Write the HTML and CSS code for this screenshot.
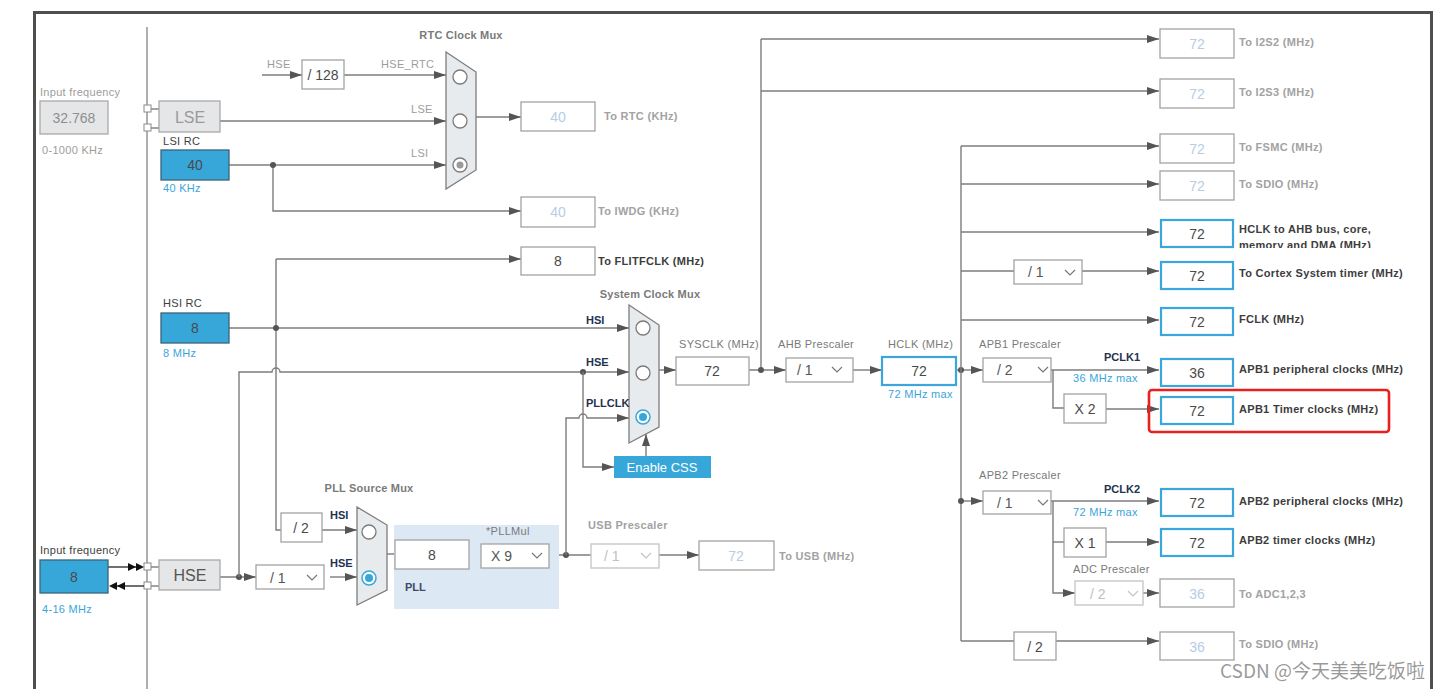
FILE: index.html
```html
<!DOCTYPE html>
<html lang="en">
<head>
<meta charset="utf-8">
<title>Clock Configuration</title>
<link rel="stylesheet" href="styles.css">
</head>
<body>
<div class="page">
  <div class="frame"></div>
  <svg class="diagram" width="1446" height="689" viewBox="0 0 1446 689" xmlns="http://www.w3.org/2000/svg">
    <defs>
      <marker id="ar" markerWidth="12" markerHeight="8" refX="12" refY="4" orient="auto" markerUnits="userSpaceOnUse">
        <path d="M0,0 L12,4 L0,8 z" class="head"/>
      </marker>
      <clipPath id="clipAhb"><rect x="1236" y="215" width="200" height="33"/></clipPath>
    </defs>

    <!-- ================= WIRES ================= -->
    <line class="bus" x1="147" y1="27" x2="147" y2="689"/>

    <!-- LSE / HSE pins -->
    <line class="w" x1="151" y1="109" x2="159" y2="109"/>
    <line class="w" x1="151" y1="128" x2="159" y2="128"/>
    <line class="w" x1="151" y1="567" x2="159" y2="567"/>
    <line class="w" x1="151" y1="586" x2="159" y2="586"/>
    <rect class="pin" x="144" y="105" width="7" height="7"/>
    <rect class="pin" x="144" y="124" width="7" height="7"/>
    <rect class="pin" x="144" y="563" width="7" height="7"/>
    <rect class="pin" x="144" y="582" width="7" height="7"/>
    <line class="wk" x1="108" y1="567" x2="140" y2="567"/>
    <line class="wk" x1="112" y1="586" x2="144" y2="586"/>
    <polygon class="blk" points="128,563 136,567 128,571"/>
    <polygon class="blk" points="136,563 144,567 136,571"/>
    <polygon class="blk" points="117,582 109,586 117,590"/>
    <polygon class="blk" points="125,582 117,586 125,590"/>

    <!-- RTC section -->
    <line class="w" x1="262" y1="75" x2="302" y2="75" marker-end="url(#ar)"/>
    <line class="w" x1="344" y1="75" x2="446" y2="75" marker-end="url(#ar)"/>
    <line class="w" x1="220" y1="121" x2="446" y2="121" marker-end="url(#ar)"/>
    <line class="w" x1="229" y1="165" x2="446" y2="165" marker-end="url(#ar)"/>
    <polyline class="w" points="273,165 273,211 521,211" marker-end="url(#ar)"/>
    <circle class="dot" cx="273" cy="165" r="3"/>
    <line class="w" x1="476" y1="117" x2="521" y2="117" marker-end="url(#ar)"/>

    <!-- I2S branch -->
    <line class="w" x1="761" y1="39" x2="761" y2="370"/>
    <line class="w" x1="761" y1="39" x2="1159" y2="39" marker-end="url(#ar)"/>
    <line class="w" x1="761" y1="91" x2="1159" y2="91" marker-end="url(#ar)"/>

    <!-- HSI -->
    <line class="w" x1="229" y1="328" x2="629" y2="328" marker-end="url(#ar)"/>
    <polyline class="w" points="276,259 276,530 281,530"/>
    <line class="w" x1="276" y1="259" x2="521" y2="259" marker-end="url(#ar)"/>
    <circle class="dot" cx="276" cy="328" r="3"/>

    <!-- HSE -->
    <line class="w" x1="220" y1="577" x2="256" y2="577" marker-end="url(#ar)"/>
    <circle class="dot" cx="239" cy="577" r="3"/>
    <path class="w" d="M239,577 L239,372 L272,372 A4,4 0 0 1 280,372 L629,372" marker-end="url(#ar)"/>
    <circle class="dot" cx="583" cy="372" r="3"/>
    <polyline class="w" points="583,372 583,467 614,467" marker-end="url(#ar)"/>

    <!-- PLL -->
    <line class="w" x1="330" y1="577" x2="357" y2="577" marker-end="url(#ar)"/>
    <line class="w" x1="322" y1="530" x2="357" y2="530" marker-end="url(#ar)"/>
    <line class="w" x1="387" y1="554" x2="395" y2="554"/>
    <line class="w" x1="469" y1="555" x2="481" y2="555"/>
    <line class="w" x1="549" y1="555" x2="591" y2="555"/>
    <circle class="dot" cx="566" cy="555" r="3"/>
    <path class="w" d="M566,555 L566,418 L579,418 A4,4 0 0 1 587,418 L629,418" marker-end="url(#ar)"/>
    <line class="w" x1="659" y1="555" x2="699" y2="555" marker-end="url(#ar)"/>

    <!-- system clock -->
    <line class="w" x1="646" y1="456" x2="646" y2="434" marker-end="url(#ar)"/>
    <line class="w" x1="659" y1="370" x2="676" y2="370" marker-end="url(#ar)"/>
    <line class="w" x1="749" y1="370" x2="786" y2="370" marker-end="url(#ar)"/>
    <circle class="dot" cx="761" cy="370" r="3"/>
    <line class="w" x1="853" y1="370" x2="882" y2="370" marker-end="url(#ar)"/>
    <line class="w" x1="956" y1="370" x2="983" y2="370" marker-end="url(#ar)"/>
    <circle class="dot" cx="961" cy="370" r="3"/>

    <!-- AHB bus -->
    <line class="w" x1="961" y1="146" x2="961" y2="641"/>
    <line class="w" x1="961" y1="146" x2="1159" y2="146" marker-end="url(#ar)"/>
    <line class="w" x1="961" y1="184" x2="1159" y2="184" marker-end="url(#ar)"/>
    <line class="w" x1="961" y1="232" x2="1159" y2="232" marker-end="url(#ar)"/>
    <line class="w" x1="961" y1="271" x2="1014" y2="271"/>
    <line class="w" x1="1082" y1="271" x2="1159" y2="271" marker-end="url(#ar)"/>
    <line class="w" x1="961" y1="320" x2="1159" y2="320" marker-end="url(#ar)"/>

    <!-- APB1 -->
    <line class="w" x1="1051" y1="370" x2="1159" y2="370" marker-end="url(#ar)"/>
    <polyline class="w" points="1053,370 1053,408 1064,408"/>
    <line class="w" x1="1106" y1="409" x2="1159" y2="409" marker-end="url(#ar)"/>

    <!-- APB2 -->
    <line class="w" x1="961" y1="501" x2="983" y2="501" marker-end="url(#ar)"/>
    <circle class="dot" cx="961" cy="501" r="3"/>
    <line class="w" x1="1051" y1="501" x2="1159" y2="501" marker-end="url(#ar)"/>
    <polyline class="w" points="1053,501 1053,593 1075,593" marker-end="url(#ar)"/>
    <line class="w" x1="1053" y1="542" x2="1064" y2="542"/>
    <line class="w" x1="1106" y1="542" x2="1159" y2="542" marker-end="url(#ar)"/>
    <line class="w" x1="1143" y1="593" x2="1159" y2="593" marker-end="url(#ar)"/>
    <line class="w" x1="961" y1="641" x2="1014" y2="641"/>
    <line class="w" x1="1056" y1="641" x2="1159" y2="641" marker-end="url(#ar)"/>

    <!-- ================= MUXES ================= -->
    <polygon class="mux" points="446,52 476,72 476,170 446,189"/>
    <circle class="rad" cx="460" cy="77" r="7"/>
    <circle class="rad" cx="460" cy="121" r="7"/>
    <circle class="rad" cx="460" cy="165" r="7"/>
    <circle class="radg" cx="460" cy="165" r="3.5"/>

    <polygon class="mux" points="629,305 659,325 659,427 629,443"/>
    <circle class="rad" cx="643" cy="328" r="7"/>
    <circle class="rad" cx="643" cy="373" r="7"/>
    <circle class="radb" cx="643" cy="417" r="7"/>
    <circle class="radbd" cx="643" cy="417" r="4"/>

    <polygon class="mux" points="357,507 387,525 387,590 357,605"/>
    <circle class="rad" cx="369" cy="532" r="7"/>
    <circle class="radb" cx="369" cy="578" r="7"/>
    <circle class="radbd" cx="369" cy="578" r="4"/>

    <!-- ================= BOXES ================= -->
    <!-- left sources -->
    <rect class="gbox" x="40" y="101" width="68" height="33"/>
    <text class="t-big t-dis2" x="74" y="118">32.768</text>
    <rect class="gbox" x="159" y="101" width="61" height="31"/>
    <text class="t-src t-src-dis" x="190" y="117">LSE</text>
    <rect class="bluebox" x="161" y="150" width="68" height="30"/>
    <text class="t-val" x="195" y="165">40</text>
    <rect class="bluebox" x="161" y="313" width="68" height="30"/>
    <text class="t-val" x="195" y="328">8</text>
    <rect class="bluebox" x="40" y="560" width="68" height="33"/>
    <text class="t-val" x="74" y="577">8</text>
    <rect class="gbox" x="159" y="560" width="61" height="30"/>
    <text class="t-src" x="190" y="575">HSE</text>

    <!-- RTC -->
    <rect class="box" x="302" y="60" width="42" height="29"/>
    <text class="t-val" x="323" y="75">/ 128</text>
    <rect class="box" x="521" y="102" width="74" height="29"/>
    <text class="t-val t-off" x="558" y="117">40</text>
    <rect class="box" x="521" y="197" width="74" height="30"/>
    <text class="t-val t-off" x="558" y="212">40</text>
    <rect class="box" x="521" y="247" width="74" height="28"/>
    <text class="t-val" x="558" y="261">8</text>

    <!-- PLL -->
    <rect class="pllbg" x="394" y="525" width="165" height="84"/>
    <rect class="box" x="281" y="513" width="41" height="29"/>
    <text class="t-val" x="301" y="528">/ 2</text>
    <rect class="box" x="256" y="565" width="68" height="24"/>
    <text class="t-dd" x="270" y="578">/ 1</text>
    <polyline class="chev" points="307,575 312,580 317,575"/>
    <rect class="box" x="395" y="540" width="74" height="29"/>
    <text class="t-val" x="432" y="555">8</text>
    <rect class="box" x="481" y="544" width="68" height="24"/>
    <text class="t-dd" x="491" y="556">X 9</text>
    <polyline class="chev" points="532,553 537,558 542,553"/>
    <rect class="dbox" x="591" y="544" width="68" height="24"/>
    <text class="t-dd t-dd-off" x="604" y="556">/ 1</text>
    <polyline class="chev chev-off" points="641,553 646,558 651,553"/>
    <rect class="box" x="699" y="541" width="75" height="29"/>
    <text class="t-val t-off" x="736" y="556">72</text>

    <!-- system -->
    <rect class="css" x="614" y="456" width="97" height="22"/>
    <text class="t-css" x="662" y="467">Enable CSS</text>
    <rect class="box" x="676" y="357" width="73" height="28"/>
    <text class="t-val" x="712" y="371">72</text>
    <rect class="box" x="786" y="358" width="67" height="24"/>
    <text class="t-dd" x="797" y="370">/ 1</text>
    <polyline class="chev" points="832,367 837,372 842,367"/>
    <rect class="bbox" x="882" y="357" width="74" height="28"/>
    <text class="t-val" x="919" y="371">72</text>

    <!-- right outputs -->
    <rect class="box" x="1160" y="29" width="74" height="29"/>
    <text class="t-val t-off" x="1197" y="44">72</text>
    <rect class="box" x="1160" y="79" width="74" height="29"/>
    <text class="t-val t-off" x="1197" y="94">72</text>
    <rect class="box" x="1160" y="134" width="74" height="29"/>
    <text class="t-val t-off" x="1197" y="149">72</text>
    <rect class="box" x="1160" y="171" width="74" height="29"/>
    <text class="t-val t-off" x="1197" y="186">72</text>
    <rect class="bbox" x="1161" y="220" width="72" height="27"/>
    <text class="t-val" x="1197" y="234">72</text>
    <rect class="box" x="1014" y="260" width="68" height="24"/>
    <text class="t-dd" x="1028" y="272">/ 1</text>
    <polyline class="chev" points="1065,270 1070,275 1075,270"/>
    <rect class="bbox" x="1161" y="262" width="72" height="27"/>
    <text class="t-val" x="1197" y="276">72</text>
    <rect class="bbox" x="1161" y="308" width="72" height="27"/>
    <text class="t-val" x="1197" y="322">72</text>

    <rect class="box" x="983" y="358" width="68" height="24"/>
    <text class="t-dd" x="997" y="370">/ 2</text>
    <polyline class="chev" points="1038,367 1043,372 1048,367"/>
    <rect class="bbox" x="1161" y="359" width="72" height="27"/>
    <text class="t-val" x="1197" y="373">36</text>
    <rect class="box" x="1064" y="394" width="42" height="29"/>
    <text class="t-val" x="1085" y="409">X 2</text>
    <rect class="bbox" x="1161" y="397" width="72" height="27"/>
    <text class="t-val" x="1197" y="411">72</text>

    <rect class="box" x="983" y="491" width="68" height="23"/>
    <text class="t-dd" x="997" y="503">/ 1</text>
    <polyline class="chev" points="1038,500 1043,505 1048,500"/>
    <rect class="bbox" x="1161" y="489" width="72" height="27"/>
    <text class="t-val" x="1197" y="503">72</text>
    <rect class="box" x="1064" y="528" width="42" height="29"/>
    <text class="t-val" x="1085" y="543">X 1</text>
    <rect class="bbox" x="1161" y="529" width="72" height="27"/>
    <text class="t-val" x="1197" y="543">72</text>
    <rect class="dbox" x="1075" y="581" width="68" height="24"/>
    <text class="t-dd t-dd-off" x="1090" y="594">/ 2</text>
    <polyline class="chev chev-off" points="1128,591 1133,596 1138,591"/>
    <rect class="box" x="1160" y="579" width="74" height="28"/>
    <text class="t-val t-off" x="1197" y="594">36</text>
    <rect class="box" x="1014" y="632" width="42" height="28"/>
    <text class="t-val" x="1035" y="647">/ 2</text>
    <rect class="box" x="1160" y="632" width="74" height="28"/>
    <text class="t-val t-off" x="1197" y="647">36</text>

    <rect class="hilite" x="1149" y="390" width="240" height="42" rx="3"/>

    <!-- ================= LABELS ================= -->
    <text class="t-note" x="40" y="92">Input frequency</text>
    <text class="t-note" x="42" y="150">0-1000 KHz</text>
    <text class="t-name" x="163" y="141">LSI RC</text>
    <text class="t-blue" x="163" y="188">40 KHz</text>
    <text class="t-name" x="163" y="303">HSI RC</text>
    <text class="t-blue" x="163" y="353">8 MHz</text>
    <text class="t-name" x="40" y="550">Input frequency</text>
    <text class="t-blue" x="42" y="609">4-16 MHz</text>

    <text class="t-title" x="461" y="35">RTC Clock Mux</text>
    <text class="t-note" x="267" y="64">HSE</text>
    <text class="t-note" x="381" y="64">HSE_RTC</text>
    <text class="t-note" x="411" y="109">LSE</text>
    <text class="t-note" x="411" y="153">LSI</text>
    <text class="t-out" x="604" y="116">To RTC (KHz)</text>
    <text class="t-out" x="598" y="211">To IWDG (KHz)</text>
    <text class="t-out t-out-on" x="598" y="261">To FLITFCLK (MHz)</text>

    <text class="t-title" x="650" y="294">System Clock Mux</text>
    <text class="t-sig" x="586" y="320">HSI</text>
    <text class="t-sig" x="586" y="362">HSE</text>
    <text class="t-sig" x="586" y="403">PLLCLK</text>
    <text class="t-lab" x="679" y="344">SYSCLK (MHz)</text>
    <text class="t-lab" x="778" y="344">AHB Prescaler</text>
    <text class="t-lab" x="888" y="344">HCLK (MHz)</text>
    <text class="t-blue" x="888" y="394">72 MHz max</text>

    <text class="t-title" x="369" y="488">PLL Source Mux</text>
    <text class="t-sig" x="330" y="515">HSI</text>
    <text class="t-sig" x="330" y="563">HSE</text>
    <text class="t-lab" x="486" y="531">*PLLMul</text>
    <text class="t-pll" x="405" y="587">PLL</text>
    <text class="t-out" x="588" y="525">USB Prescaler</text>
    <text class="t-out" x="779" y="556">To USB (MHz)</text>

    <text class="t-out" x="1239" y="42">To I2S2 (MHz)</text>
    <text class="t-out" x="1239" y="92">To I2S3 (MHz)</text>
    <text class="t-out" x="1239" y="147">To FSMC (MHz)</text>
    <text class="t-out" x="1239" y="184">To SDIO (MHz)</text>
    <g clip-path="url(#clipAhb)">
      <text class="t-out t-out-on" x="1239" y="229">HCLK to AHB bus, core,</text>
      <text class="t-out t-out-on" x="1239" y="245">memory and DMA (MHz)</text>
    </g>
    <text class="t-out t-out-on" x="1239" y="273">To Cortex System timer (MHz)</text>
    <text class="t-out t-out-on" x="1239" y="319">FCLK (MHz)</text>
    <text class="t-lab" x="979" y="344">APB1 Prescaler</text>
    <text class="t-sig" x="1104" y="357">PCLK1</text>
    <text class="t-blue" x="1073" y="378">36 MHz max</text>
    <text class="t-out t-out-on" x="1239" y="369">APB1 peripheral clocks (MHz)</text>
    <text class="t-out t-out-on" x="1239" y="409">APB1 Timer clocks (MHz)</text>
    <text class="t-lab" x="979" y="475">APB2 Prescaler</text>
    <text class="t-sig" x="1104" y="489">PCLK2</text>
    <text class="t-blue" x="1073" y="512">72 MHz max</text>
    <text class="t-out t-out-on" x="1239" y="501">APB2 peripheral clocks (MHz)</text>
    <text class="t-out t-out-on" x="1239" y="540">APB2 timer clocks (MHz)</text>
    <text class="t-lab" x="1073" y="569">ADC Prescaler</text>
    <text class="t-out" x="1239" y="594">To ADC1,2,3</text>
    <text class="t-out" x="1239" y="644">To SDIO (MHz)</text>
  </svg>
  <div class="watermark">CSDN @今天美美吃饭啦</div>
</div>
</body>
</html>
```
FILE: styles.css
```css
html, body {
  margin: 0;
  padding: 0;
  background: #ffffff;
}
body {
  font-family: "Liberation Sans", Arial, sans-serif;
  overflow: hidden;
}
.page {
  position: relative;
  width: 1446px;
  height: 689px;
  overflow: hidden;
  background: #fff;
}
.frame {
  position: absolute;
  left: 33px;
  top: 11px;
  width: 1394px;
  height: 720px;
  border: 3px solid #4f4f4f;
  border-bottom: none;
}
.diagram {
  position: absolute;
  left: 0;
  top: 0;
  display: block;
}

/* wires */
.bus { stroke: #8d8d8d; stroke-width: 1.4; }
.w { stroke: #7c7c7c; stroke-width: 1.4; fill: none; }
.wk { stroke: #333; stroke-width: 1.4; }
.head { fill: #555; }
.blk { fill: #111; }
.dot { fill: #555; }
.pin { fill: #fff; stroke: #8a8a8a; stroke-width: 1; }

/* muxes */
.mux { fill: #e8ebee; stroke: #7d7d7d; stroke-width: 1.3; }
.rad { fill: #fff; stroke: #7a7a7a; stroke-width: 1.3; }
.radg { fill: #9a9a9a; }
.radb { fill: #fff; stroke: #37a7da; stroke-width: 1.5; }
.radbd { fill: #37a7da; }

/* boxes */
.box { fill: #fff; stroke: #a3a3a3; stroke-width: 1.3; }
.dbox { fill: #fff; stroke: #c4c4c4; stroke-width: 1.3; }
.gbox { fill: #e5e6e8; stroke: #a9a9a9; stroke-width: 1.3; }
.bluebox { fill: #37a7da; stroke: #3a6478; stroke-width: 1.3; }
.bbox { fill: #fff; stroke: #3aa6dc; stroke-width: 2.2; }
.pllbg { fill: #dce9f5; }
.css { fill: #37a7da; }
.hilite { fill: none; stroke: #e8201e; stroke-width: 2.6; }
.chev { fill: none; stroke: #777; stroke-width: 1.2; }
.chev-off { stroke: #c4c4c4; }

/* texts */
text {
  font-family: "Liberation Sans", Arial, sans-serif;
  dominant-baseline: central;
}
.t-val { font-size: 14px; fill: #4a4a4a; text-anchor: middle; }
.t-off { fill: #b6cde6; }
.t-big { font-size: 14px; text-anchor: middle; }
.t-dis2 { fill: #8e8e8e; }
.t-src { font-size: 16px; fill: #555; text-anchor: middle; }
.t-src-dis { fill: #9a9a9a; }
.t-dd { font-size: 14px; fill: #555; }
.t-dd-off { fill: #c0c0c0; }
.t-css { font-size: 13px; fill: #fff; text-anchor: middle; }
.t-note { font-size: 11px; fill: #9c9c9c; letter-spacing: 0.3px; }
.t-name { font-size: 11px; fill: #3e3e3e; letter-spacing: 0.3px; }
.t-blue { font-size: 11px; fill: #38a6db; letter-spacing: 0.3px; }
.t-title { font-size: 11px; font-weight: bold; fill: #7a7a7a; text-anchor: middle; letter-spacing: 0.2px; }
.t-lab { font-size: 11px; fill: #7a7a7a; letter-spacing: 0.3px; }
.t-sig { font-size: 11px; font-weight: bold; fill: #243250; }
.t-pll { font-size: 11px; font-weight: bold; fill: #3d4a63; }
.t-out { font-size: 11px; font-weight: bold; fill: #a2a2a2; letter-spacing: 0.3px; }
.t-out-on { fill: #3d3d3d; }

.watermark {
  position: absolute;
  left: 1220px;
  top: 658px;
  font-family: "Noto Sans CJK SC", "Liberation Sans", sans-serif;
  font-size: 19px;
  line-height: 24px;
  color: rgba(120, 120, 120, 0.75);
  white-space: nowrap;
}
```
